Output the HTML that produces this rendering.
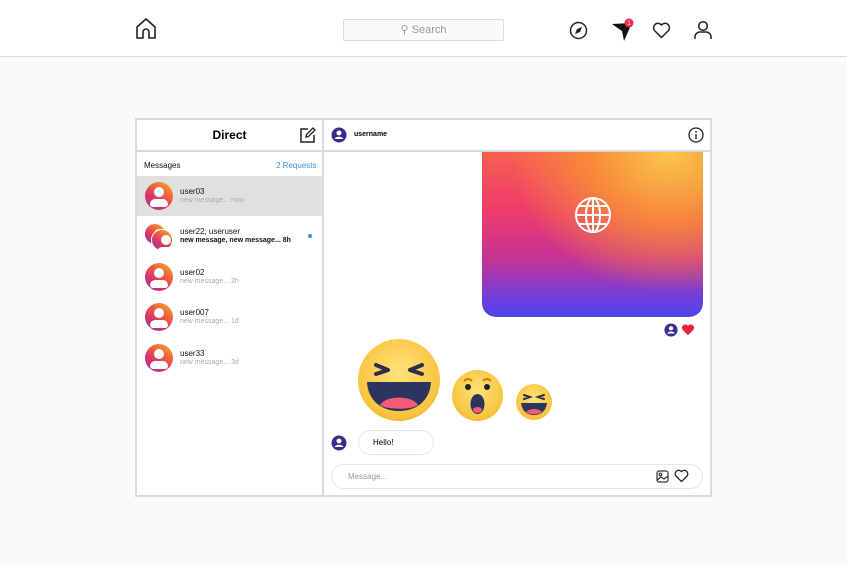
<!DOCTYPE html>
<html><head><meta charset="utf-8"><style>
*{margin:0;padding:0;box-sizing:border-box}
body{width:847px;height:565px;background:#fafafa;font-family:"Liberation Sans",Arial,sans-serif;position:relative;overflow:hidden}
.hdr{position:absolute;left:0;top:0;width:847px;height:57px;background:#fff;border-bottom:1px solid #dbdbdb}
.abs{position:absolute}
.search{left:343px;top:19px;width:161px;height:22px;border:1px solid #dbdbdb;background:#fafafa;border-radius:2px;color:#999;font-size:11px;text-align:center;line-height:20px}
.panel{left:135px;top:118px;width:577px;height:379px;border:2px solid #dbdbdb;background:#fff}
.row{position:absolute;left:0;width:185px;height:40px}
.av{position:absolute;left:8px;top:6px;width:28px;height:28px;border-radius:50%;background:linear-gradient(35deg,#8f3aa8 0%,#d9326a 35%,#f0663a 65%,#f7b62c 100%)}
.av:before{content:"";position:absolute;left:9px;top:5px;width:10px;height:10px;border-radius:50%;background:#fff}
.av:after{content:"";position:absolute;left:5px;top:17px;width:18px;height:8px;border-radius:9px 9px 5px 5px;background:#fff}
.nm{position:absolute;left:43px;top:11px;font-size:8px;color:#111}
.sub{position:absolute;left:43px;top:21px;font-size:7px;color:#aaa}
.em{position:absolute;border-radius:50%;background:radial-gradient(circle at 50% 40%,#ffe27a,#f9c23c 70%,#e9a41f)}
</style></head><body>
<div class="hdr"></div>
<svg class="abs" style="left:135px;top:17px" width="22" height="23" viewBox="0 0 22 23"><path d="M2 10 L11 2 L20 10 V21 H14 V15 A3 3 0 0 0 8 15 V21 H2 Z" fill="none" stroke="#222" stroke-width="1.6" stroke-linejoin="round"/></svg>
<div class="abs search">&#9906; Search</div>
<svg class="abs" style="left:569px;top:21px" width="19" height="19" viewBox="0 0 19 19"><circle cx="9.5" cy="9.5" r="8" fill="none" stroke="#222" stroke-width="1.5"/><path d="M6 13 L8 8 L13 6 L11 11 Z" fill="#222"/></svg>
<svg class="abs" style="left:611px;top:18px" width="24" height="24" viewBox="0 0 24 24"><path d="M1 6 L21 5 L13 23 L11 13 Z" fill="#111"/><circle cx="18" cy="5" r="4.5" fill="#ed2c4f"/><text x="18" y="7" font-size="6" fill="#fff" text-anchor="middle" font-family="Liberation Sans">1</text></svg>
<svg class="abs" style="left:652px;top:22px" width="19" height="17" viewBox="0 0 19 17"><path d="M9.5 15.5 L2.5 8.5 A4 4 0 0 1 9.5 3 A4 4 0 0 1 16.5 8.5 Z" fill="none" stroke="#222" stroke-width="1.5" stroke-linejoin="round"/></svg>
<svg class="abs" style="left:693px;top:20px" width="20" height="20" viewBox="0 0 20 20"><circle cx="10" cy="6" r="4.3" fill="none" stroke="#222" stroke-width="1.5"/><path d="M2 19 V17 A5 5 0 0 1 7 12 H13 A5 5 0 0 1 18 17 V19" fill="none" stroke="#222" stroke-width="1.5"/></svg>

<div class="abs panel">
 <div class="abs" style="left:0;top:0;width:185px;height:32px;border-bottom:2px solid #dbdbdb;text-align:center;font-weight:bold;font-size:12px;line-height:31px">Direct</div>
 <svg class="abs" style="left:162px;top:7px" width="17" height="17" viewBox="0 0 17 17"><path d="M9 2 H2 V15 H15 V8" fill="none" stroke="#222" stroke-width="1.5"/><path d="M7 10 L7.5 7.5 L14 1 L16 3 L9.5 9.5 Z" fill="none" stroke="#222" stroke-width="1.3"/></svg>
 <div class="abs" style="left:185px;top:0;width:2px;height:375px;background:#dbdbdb"></div>
 <div class="abs" style="left:7px;top:41px;font-size:8px;color:#111">Messages</div>
 <div class="abs" style="left:139px;top:41px;font-size:8px;color:#3a92d6">2 Requests</div>
 <div class="row" style="top:56px;background:#e0e0e0"><div class="av"></div><div class="nm">user03</div><div class="sub">new message... now</div></div>
 <div class="row" style="top:96px"><div class="av" style="width:20px;height:20px;left:8px;top:8px"></div><div class="av" style="width:22px;height:22px;left:14px;top:13px;border:1px solid #fff"></div><div class="nm">user22, useruser</div><div class="sub" style="color:#111;font-weight:bold">new message, new message... 8h</div><div class="abs" style="left:171px;top:18px;width:4px;height:4px;border-radius:50%;background:#3a92d6"></div></div>
 <div class="row" style="top:137px"><div class="av"></div><div class="nm">user02</div><div class="sub">new message... 2h</div></div>
 <div class="row" style="top:177px"><div class="av"></div><div class="nm">user007</div><div class="sub">new message... 1d</div></div>
 <div class="row" style="top:218px"><div class="av"></div><div class="nm">user33</div><div class="sub">new message... 3d</div></div>

 <div class="abs" style="left:187px;top:0;width:386px;height:32px;border-bottom:2px solid #dbdbdb"></div>
 <svg class="abs" style="left:194px;top:7px" width="16" height="16" viewBox="0 0 16 16"><circle cx="8" cy="8" r="7.5" fill="#3d2b8a"/><circle cx="8" cy="6" r="2.5" fill="#fff"/><path d="M3.5 12 A5 4 0 0 1 12.5 12" fill="#fff"/></svg>
 <div class="abs" style="left:217px;top:11px;font-size:7px;font-weight:bold">username</div>
 <svg class="abs" style="left:551px;top:7px" width="16" height="16" viewBox="0 0 16 16"><circle cx="8" cy="8" r="7" fill="none" stroke="#222" stroke-width="1.3"/><rect x="7.3" y="7" width="1.4" height="5" fill="#222"/><circle cx="8" cy="4.8" r="0.9" fill="#222"/></svg>

 <div class="abs" style="left:345px;top:32px;width:221px;height:165px;border-radius:0 0 14px 14px;background:radial-gradient(ellipse at 85% 0%,#f9c74a 0%,rgba(249,150,50,.8) 30%,rgba(240,80,90,0) 60%),linear-gradient(180deg,#f6604f 0%,#ee3c6a 35%,#c53395 65%,#6a3fe0 90%,#4a46ea 100%)"></div>
 <svg class="abs" style="left:436px;top:75px" width="40" height="40" viewBox="0 0 40 40" fill="none" stroke="#fff" stroke-width="2"><circle cx="20" cy="20" r="17"/><ellipse cx="20" cy="20" rx="7" ry="17"/><line x1="20" y1="3" x2="20" y2="37"/><line x1="3" y1="20" x2="37" y2="20"/><path d="M6 11 H34 M6 29 H34"/></svg>
 <svg class="abs" style="left:527px;top:203px" width="14" height="14" viewBox="0 0 16 16"><circle cx="8" cy="8" r="7.5" fill="#3d2b8a"/><circle cx="8" cy="6" r="2.5" fill="#fff"/><path d="M3.5 12 A5 4 0 0 1 12.5 12" fill="#fff"/></svg>
 <svg class="abs" style="left:544px;top:204px" width="14" height="12" viewBox="0 0 19 17"><path d="M9.5 16 L2 8.5 A4.3 4.3 0 0 1 9.5 2.5 A4.3 4.3 0 0 1 17 8.5 Z" fill="#ed1f45"/></svg>

 <div class="em" style="left:221px;top:219px;width:82px;height:82px"></div>
 <svg class="abs" style="left:221px;top:219px" width="82" height="82" viewBox="0 0 82 82"><path d="M18 26 L30 31 L18 35 M64 26 L52 31 L64 35" fill="none" stroke="#2e2e45" stroke-width="4" stroke-linecap="round" stroke-linejoin="round"/><path d="M9 43 H73 C72 62 58 72 41 72 C24 72 10 62 9 43 Z" fill="#2c3560"/><path d="M22 66 C28 56 54 56 60 66 C54 71 28 71 22 66 Z" fill="#f35b74"/></svg>
 <div class="em" style="left:315px;top:250px;width:51px;height:51px"></div>
 <svg class="abs" style="left:315px;top:250px" width="51" height="51" viewBox="0 0 51 51"><path d="M12 11 Q16 7 20 11 M31 11 Q35 7 39 11" fill="none" stroke="#c87a10" stroke-width="2"/><circle cx="16" cy="17" r="3" fill="#222"/><circle cx="35" cy="17" r="3" fill="#222"/><ellipse cx="25.5" cy="34" rx="7" ry="10" fill="#2c3560"/><ellipse cx="25.5" cy="40" rx="4.5" ry="3" fill="#f35b74"/></svg>
 <div class="em" style="left:379px;top:264px;width:36px;height:36px"></div>
 <svg class="abs" style="left:379px;top:264px" width="36" height="36" viewBox="0 0 36 36"><path d="M8 11 L14 13 L8 15 M28 11 L22 13 L28 15" fill="none" stroke="#2e2e45" stroke-width="2" stroke-linecap="round"/><path d="M5 19 H31 C30 27 25 31 18 31 C11 31 6 27 5 19 Z" fill="#2c3560"/><path d="M10 28 C14 24 22 24 26 28 C22 31 14 31 10 28 Z" fill="#f35b74"/></svg>

 <svg class="abs" style="left:194px;top:315px" width="16" height="16" viewBox="0 0 16 16"><circle cx="8" cy="8" r="7.5" fill="#3d2b8a"/><circle cx="8" cy="6" r="2.5" fill="#fff"/><path d="M3.5 12 A5 4 0 0 1 12.5 12" fill="#fff"/></svg>
 <div class="abs" style="left:221px;top:310px;width:76px;height:25px;border:1px solid #e6e6e6;border-radius:13px;font-size:8px;line-height:23px;padding-left:14px">Hello!</div>
 <div class="abs" style="left:194px;top:344px;width:372px;height:25px;border:1px solid #e6e6e6;border-radius:13px;font-size:8px;line-height:23px;padding-left:16px;color:#999">Message...</div>
 <svg class="abs" style="left:519px;top:350px" width="13" height="13" viewBox="0 0 13 13" fill="none" stroke="#333" stroke-width="1.2"><rect x="1" y="1" width="11" height="11" rx="2"/><circle cx="4.5" cy="4.5" r="1.3"/><path d="M1 10 L5 7 L8 9 L12 6"/></svg>
 <svg class="abs" style="left:537px;top:349px" width="15" height="14" viewBox="0 0 19 17"><path d="M9.5 15.5 L2.5 8.5 A4 4 0 0 1 9.5 3 A4 4 0 0 1 16.5 8.5 Z" fill="none" stroke="#222" stroke-width="1.6" stroke-linejoin="round"/></svg>
</div>
</body></html>
